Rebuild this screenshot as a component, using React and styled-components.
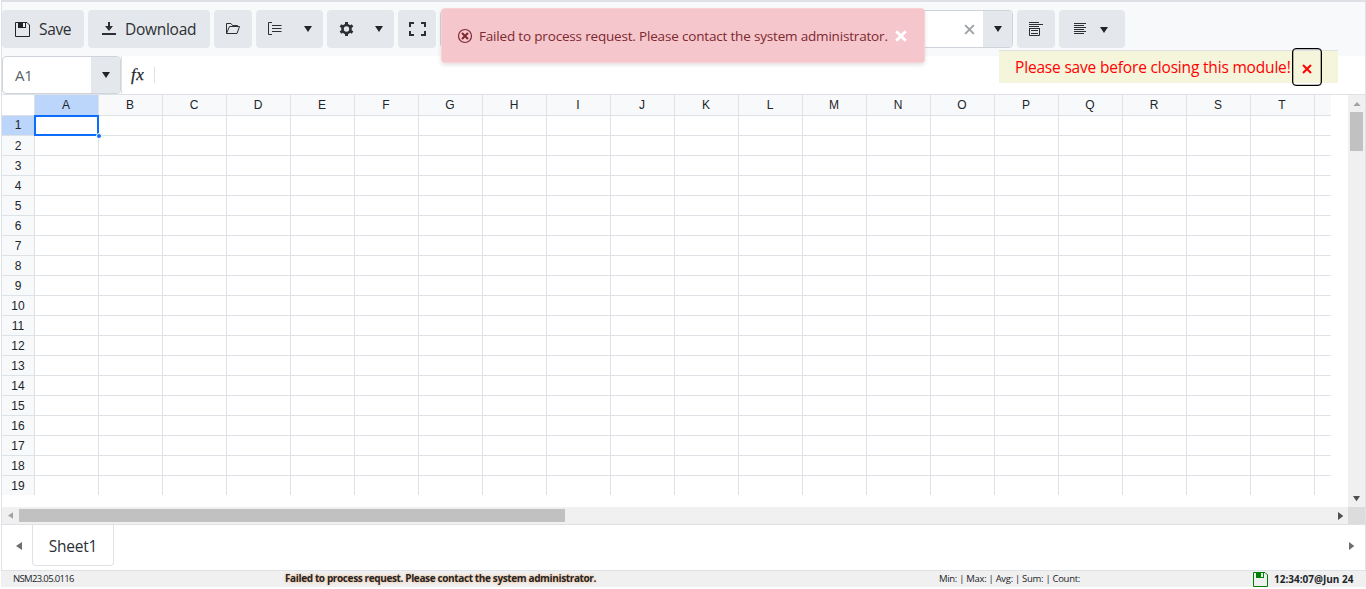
import React from 'react';
import styled, { createGlobalStyle, css } from 'styled-components';

const Global = createGlobalStyle`
  *, *::before, *::after { box-sizing: border-box; }
  body { margin: 0; background: #fff; color: #212529; font-family: "Open Sans", "Noto Sans", sans-serif; overflow: hidden; }
  svg { display: block; flex: none; }
`;
const Page = styled.div`
  position: relative; width: 1366px; height: 589px; padding-left: 1px;
`;
const Sheet = styled.main`
  height: 571px; border: 1px solid #dee2e6; border-top: 2px solid #dfe0e6;
  display: flex; flex-direction: column;
`;
const Toolbar = styled.header`
  height: 54px; padding-top: 8px; background: #f8f9fa; display: flex; gap: 4px; flex: none;
`;
const Button = styled.button`
  width: ${p => p.$w}px; height: 38px; flex: none; border: 0; border-radius: 4px; background: #e4e7eb;
  display: flex; align-items: center; padding: 0 0 0 ${p => p.$pad || 11}px; gap: ${p => p.$gap || 0}px;
  color: #2c3034; font: 400 15.5px/24px "Open Sans", sans-serif; letter-spacing: ${p => p.$ls || 0}px;
  white-space: nowrap;
`;
const ComboBox = styled.div`
  width: 573px; height: 38px; flex: none; border: 1px solid #ced4da; border-radius: 4px; background: #fff;
  display: flex; align-items: center; justify-content: flex-end; gap: 8px; overflow: hidden;
`;
const Drop = styled.span`
  width: 29px; height: 100%; background: #e4e7eb; display: flex; align-items: center; justify-content: center;
`;
const FormulaBar = styled.div`
  height: 39px; border-bottom: 1px solid #dee2e6; display: flex; align-items: center; flex: none;
`;
const NameBox = styled.div`
  width: 119px; height: 38px; align-self: flex-start; border: 1px solid #ced4da; border-radius: 4px;
  display: flex; overflow: hidden;
`;
const NameText = styled.span`
  flex: 1; padding-left: 12px; color: #5a6168; font-size: 15px; line-height: 37px; letter-spacing: -0.2px;
`;
const Fx = styled.span`
  width: 33px; height: 38px; border-left: 1px solid #dee2e6; padding-left: 9px;
  font: italic 400 17px/37px "Liberation Serif", serif; color: #212529; -webkit-text-stroke: 0.25px #212529;
  letter-spacing: 0.5px;
`;
const Divider = styled.span`width: 1px; height: 16px; background: #dee2e6;`;
const View = styled.section`
  height: 412px; flex: none; display: flex; justify-content: space-between;
`;
const Grid = styled.div`
  display: grid; width: 1329px; height: 400px; overflow: hidden;
  grid-template-columns: 33px repeat(20, 64px) 16px;
  grid-template-rows: 21px repeat(18, 20px) 19px;
  font: 12px/20px "Liberation Sans", sans-serif; text-align: center;
`;
const Cell = styled.div`
  position: relative;
  border-right: ${p => (p.$end ? 0 : 1)}px solid #dee2e6;
  border-bottom: ${p => (p.$last ? 0 : 1)}px solid #dee2e6;
  line-height: 20px; padding-right: ${p => (p.$column ? 1 : 0)}px;
  ${p => p.$head && css`background: #f8f9fa;`}
  ${p => p.$active && css`background: #bbd5fb;`}
  ${p => p.$active && !p.$column && css`line-height: 18px;`}
  ${p => p.$blank && css`background: #fff;`}
`;
const Selection = styled.div`
  position: absolute; left: -1px; top: -1px; width: 65px; height: 21px; border: 2px solid #0d6efd; z-index: 1;
  &::after { content: ""; position: absolute; right: -5px; bottom: -5px; width: 6px; height: 6px;
    background: #0d6efd; border: 1px solid #fff; border-radius: 3px; }
`;
const VScroll = styled.div`
  width: 17px; height: 412px; padding: 7px 0 6px; background: #f0f0f0;
  display: flex; flex-direction: column; align-items: center;
`;
const VThumb = styled.div`width: 13px; height: 39px; margin: 6px 0 auto; background: #c1c1c1;`;
const HScroll = styled.div`
  height: 18px; flex: none; background: #f0f0f0; border-bottom: 1px solid #dee2e6; display: flex; align-items: center; padding-left: 6px;
`;
const HThumb = styled.div`width: 546px; height: 13px; margin: 0 auto 0 6px; background: #c1c1c1;`;
const Corner = styled.div`width: 17px; height: 17px; margin-left: 5px; background: #dcdcdc;`;
const Tabs = styled.nav`
  height: 45px; flex: none; display: flex; align-items: center; padding: 0 11px 3px 14px; justify-content: space-between;
`;
const TabGroup = styled.div`display: flex; align-items: center; height: 100%;`;
const Tab = styled.div`
  align-self: flex-start; width: 82px; height: 41px; margin-left: 10px; border: 1px solid #dee2e6; border-top: 0;
  border-radius: 0 0 4px 4px; text-align: center; color: #2c3034; font-size: 15.5px; line-height: 42px; letter-spacing: -0.25px;
`;
const Status = styled.footer`
  height: 16px; background: #f0f0f0; display: grid; grid-template-columns: 272px 653px 315px 1fr;
  padding-left: 12px; font-size: 9.5px; line-height: 16px; white-space: nowrap;
`;
const Version = styled.span`letter-spacing: -0.65px;`;
const StatusError = styled.strong`
  font-size: 10px; letter-spacing: -0.37px; line-height: 15px; text-shadow: 0 0 3px #f4a460;
`;
const Totals = styled.span`padding-left: 1px; letter-spacing: -0.3px;`;
const Clock = styled.strong`display: flex; gap: 6px; font-size: 10px; letter-spacing: 0; padding-top: 1px; line-height: 14px;`;
const Toast = styled.div`
  position: absolute; left: 441px; top: 8px; width: 484px; height: 55px; background: #f5c6cb; border: 1px solid #f8d0d5;
  border-radius: 4px; box-shadow: 0 2px 4px rgba(0,0,0,.12); display: flex; align-items: center; padding-left: 15px;
  color: #7d2930; white-space: nowrap;
`;
const ToastText = styled.span`flex: none; margin-left: 6px; width: 416px; font-size: 13.5px; letter-spacing: -0.18px;`;
const Warning = styled.div`
  position: absolute; left: 999px; top: 51px; width: 339px; height: 32px; background: #f5f5dc;
  box-shadow: 0 -1px 0 #dee2e6; display: flex; align-items: center; padding-left: 16px;
  color: #f00; white-space: nowrap;
`;
const WarningText = styled.span`flex: none; width: 277px; font-size: 15.5px; letter-spacing: -0.18px; line-height: 33px;`;
const Close = styled.button`
  width: 30px; height: 38px; flex: none; padding: 3px 0 0; border: 1px solid #000; border-radius: 4px; background: transparent;
  display: flex; align-items: center; justify-content: center; box-shadow: inset 0 0 0 .3px #000;
`;
const Lowered = styled.span`padding-top: 2px;`;

const Triangle = ({ dir = 'down', size = 8, color = '#212529' }) => {
  const shapes = {
    down: [size, size * 0.75, 'M0 0H8L4 6Z', '0 0 8 6'],
    up: [size, size * 0.55, 'M0 4.4H8L4 0Z', '0 0 8 4.4'],
    left: [size * 0.75, size, 'M5 0V8L0 4Z', '0 0 5 8'],
    right: [size * 0.65, size, 'M0 0V8L5 4Z', '0 0 5 8'],
  };
  const [w, h, d, box] = shapes[dir];
  return <svg width={w} height={h} viewBox={box} preserveAspectRatio="none"><path d={d} fill={color} /></svg>;
};
const Icon = ({ children, w = 16, h = 16 }) => (
  <svg width={w} height={h} viewBox={`0 0 ${w} ${h}`} fill="none" stroke="currentColor">{children}</svg>
);
const SaveIcon = ({ color, size = 15 }) => (
  <svg width={size} height={size} viewBox="0 0 15 15" fill="none" stroke={color}>
    <path d="M.5.5H12L14.5 3V14.5H.5Z" />
    <path d="M3 1H11V6H3Z" fill={color} stroke="none" />
    <path d="M8 1H10V5H8Z" fill="#f0f0f0" stroke="none" />
  </svg>
);
const Cross = ({ size, color, w }) => (
  <svg width={size} height={size} viewBox="0 0 10 10"><path d="M1 1L9 9M9 1L1 9" stroke={color} strokeWidth={w} /></svg>
);

const columns = 'ABCDEFGHIJKLMNOPQRST'.split('');
const rows = Array.from({ length: 19 }, (_, i) => i + 1);

export default function App() {
  return (
    <Page>
      <Global />
      <Sheet>
        <Toolbar>
          <Button $w={82} $pad={13} $gap={9} $ls={-0.35}><SaveIcon color="#212529" />Save</Button>
          <Button $w={122} $pad={13} $gap={8} $ls={-0.28}>
            <Icon><path d="M8 1V7" strokeWidth="2" /><path d="M4 5H12L8 10Z" fill="currentColor" stroke="none" /><path d="M1 13H15" strokeWidth="2" /></Icon>
            Download
          </Button>
          <Button $w={38}><Icon><path d="M1.5 12.5V2.5H6L7.5 4.5H12.5V5.5M1.5 12.5L4.5 5.5H14.5L12 12.5Z" /></Icon></Button>
          <Button $w={67} $gap={21}>
            <Icon><path d="M5 1.5H1.5V13.5H5M5 4.5H14.5M5 7.5H14.5M5 10.5H14.5" /></Icon><Triangle />
          </Button>
          <Button $w={67} $gap={21}>
            <Icon>
              <circle cx="8.5" cy="8" r="4" strokeWidth="2.6" />
              <path d="M8.5 1V4M8.5 12V15M2.4 4.5L5 6M12 10L14.6 11.5M14.6 4.5L12 6M5 10L2.4 11.5" strokeWidth="3" />
            </Icon><Triangle />
          </Button>
          <Button $w={38}><Icon w={17}><path d="M1 6V2H5M12 2H16V6M16 10V14H12M5 14H1V10" strokeWidth="2" /></Icon></Button>
          <ComboBox><Cross size={11} color="#a0a4a8" w={1.8} /><Drop><Triangle /></Drop></ComboBox>
          <Button $w={38}>
            <Icon><path d="M1 1.5H11M1 3.5H15M1 5.5H11M1 7.5H12M1.5 7V14.5H11.5V7M3 9.5H10M3 12.5H10" /></Icon>
          </Button>
          <Button $w={66} $pad={14} $gap={14}>
            <Icon w={13}><path d="M1 2.5H13M1 4.5H11M1 6.5H13M1 8.5H11M1 10.5H13M1 12.5H11" /></Icon>
            <Lowered><Triangle /></Lowered>
          </Button>
        </Toolbar>
        <FormulaBar>
          <NameBox><NameText>A1</NameText><Drop><Triangle /></Drop></NameBox>
          <Fx>fx</Fx><Divider />
        </FormulaBar>
        <View>
          <Grid>
            <Cell $head $blank />
            {columns.map((c, i) => <Cell key={c} $head $column $active={i === 0}>{c}</Cell>)}
            <Cell $head $end />
            {rows.map(r => (
              <React.Fragment key={r}>
                <Cell $head $active={r === 1} $last={r === 19}>{r}</Cell>
                {columns.map((c, i) => <Cell key={c} $last={r === 19}>{r === 1 && i === 0 && <Selection />}</Cell>)}
                <Cell $end $last={r === 19} />
              </React.Fragment>
            ))}
          </Grid>
          <VScroll>
            <Triangle dir="up" size={8} color="#a3a3a3" /><VThumb /><Triangle dir="down" size={7} color="#505050" />
          </VScroll>
        </View>
        <HScroll>
          <Triangle dir="left" size={7} color="#a3a3a3" /><HThumb />
          <Triangle dir="right" size={8} color="#505050" /><Corner />
        </HScroll>
        <Tabs>
          <TabGroup><Triangle dir="left" size={8} color="#6c6e70" /><Tab>Sheet1</Tab></TabGroup>
          <Triangle dir="right" size={8} color="#6c6e70" />
        </Tabs>
      </Sheet>
      <Status>
        <Version>NSM23.05.0116</Version>
        <StatusError>Failed to process request. Please contact the system administrator.</StatusError>
        <Totals>Min: | Max: | Avg: | Sum: | Count:</Totals>
        <Clock><SaveIcon color="#008000" />12:34:07@Jun 24</Clock>
      </Status>
      <Toast role="alert">
        <Icon><circle cx="8" cy="8" r="6.5" strokeWidth="1.2" /><path d="M5 5L11 11M11 5L5 11" strokeWidth="2" /></Icon>
        <ToastText>Failed to process request. Please contact the system administrator.</ToastText>
        <Cross size={12} color="#fff" w={2.4} />
      </Toast>
      <Warning>
        <WarningText>Please save before closing this module!</WarningText>
        <Close><Cross size={10} color="#f00" w={2} /></Close>
      </Warning>
    </Page>
  );
}
